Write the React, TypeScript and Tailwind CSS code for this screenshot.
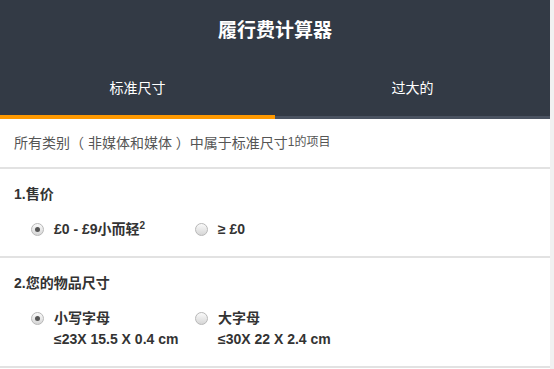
import React from "react";

const font = { fontFamily: '"Liberation Sans", Arial, "Noto Sans CJK SC", sans-serif' };

function Radio({ checked }: { checked?: boolean }) {
  return (
    <span className="relative flex h-[13px] w-[13px] shrink-0 items-center justify-center rounded-full border border-[#b8b8b8] bg-gradient-to-b from-[#fafafa] to-[#d6d6d6]">
      {checked && <span className="h-[5px] w-[5px] rounded-full bg-[#555]" />}
    </span>
  );
}

export default function App() {
  return (
    <div className="flex h-[369px] w-[554px] overflow-hidden bg-white" style={font}>
      <div className="flex w-[550px] flex-col">
        <div className="flex h-[119px] flex-col bg-[#333a45]">
          <div className="flex h-[60px] items-center justify-center pt-[2px] text-[19px] font-bold text-white">
            履行费计算器
          </div>
          <div className="flex h-[59px]">
            <div className="w-[275px] border-b-4 border-[#ff9900] pt-[19px] text-center text-[14px] leading-[18px] text-white">
              标准尺寸
            </div>
            <div className="flex-1 border-b-[3px] border-[#4b5361] pt-[19px] text-center text-[14px] leading-[18px] text-white">
              过大的
            </div>
          </div>
        </div>
        <div className="flex h-[50px] items-center border-b-2 border-[#e2e2e2] pl-[14px] pt-[1px] text-[14px] text-[#555]">
          <span>
            所有类别（ 非媒体和媒体 ）中属于标准尺寸
            <sup className="relative top-[-2px] text-[12px]">1的项目</sup>
          </span>
        </div>
        <div className="flex flex-col border-b-2 border-[#e2e2e2] pb-[17px] pl-[14px] pt-[15px] text-[#333]">
          <div className="text-[14px] font-bold leading-[20px]">1.售价</div>
          <div className="mt-[15px] flex pl-[17px] text-[14px] font-bold leading-[20px]">
            <div className="flex w-[164px] items-center gap-[10px]">
              <Radio checked />
              <span>
                £0 - £9小而轻<sup className="text-[10px]">2</sup>
              </span>
            </div>
            <div className="flex items-center gap-[10px]">
              <Radio />
              <span>≥ £0</span>
            </div>
          </div>
        </div>
        <div className="flex flex-col border-b-2 border-[#e2e2e2] pb-[16px] pl-[14px] pt-[15px] text-[#333]">
          <div className="text-[14px] font-bold leading-[20px]">2.您的物品尺寸</div>
          <div className="mt-[15px] flex pl-[17px] text-[14px] font-bold leading-[21px]">
            <div className="flex w-[164px] items-start gap-[10px]">
              <span className="mt-[4px]">
                <Radio checked />
              </span>
              <span className="flex flex-col">
                <span>小写字母</span>
                <span>≤23X 15.5 X 0.4 cm</span>
              </span>
            </div>
            <div className="flex items-start gap-[10px]">
              <span className="mt-[4px]">
                <Radio />
              </span>
              <span className="flex flex-col">
                <span>大字母</span>
                <span>≤30X 22 X 2.4 cm</span>
              </span>
            </div>
          </div>
        </div>
      </div>
      <div className="flex-1 bg-[#f1f1f1]" />
    </div>
  );
}
